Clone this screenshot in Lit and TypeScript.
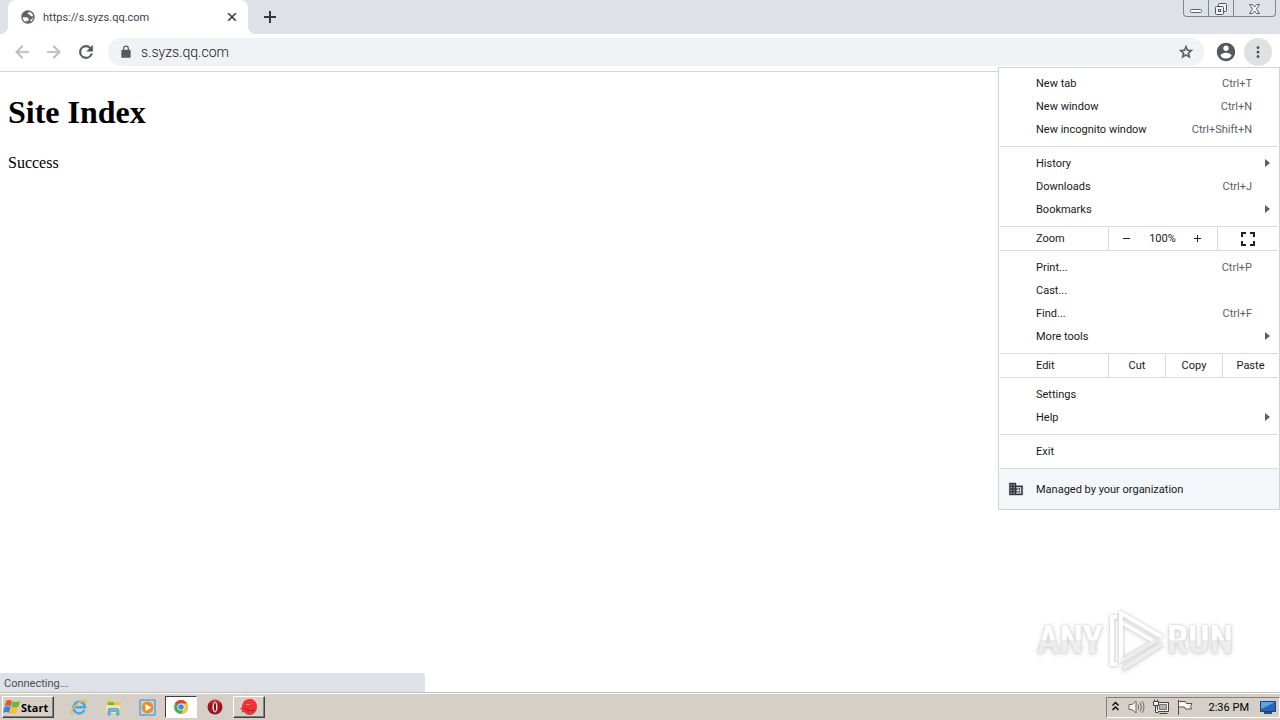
import { LitElement, html, css, svg, nothing } from "lit";
import { customElement } from "lit/decorators.js";

interface MenuEntry {
  label: string;
  keys?: string;
  submenu?: boolean;
}

const TAB_ITEMS: MenuEntry[] = [
  { label: "New tab", keys: "Ctrl+T" },
  { label: "New window", keys: "Ctrl+N" },
  { label: "New incognito window", keys: "Ctrl+Shift+N" },
];
const LIBRARY_ITEMS: MenuEntry[] = [
  { label: "History", submenu: true },
  { label: "Downloads", keys: "Ctrl+J" },
  { label: "Bookmarks", submenu: true },
];
const PAGE_ITEMS: MenuEntry[] = [
  { label: "Print...", keys: "Ctrl+P" },
  { label: "Cast..." },
  { label: "Find...", keys: "Ctrl+F" },
  { label: "More tools", submenu: true },
];
const SETTINGS_ITEMS: MenuEntry[] = [{ label: "Settings" }, { label: "Help", submenu: true }];

const reset = css`
  * {
    box-sizing: border-box;
  }
  button {
    font: inherit;
    color: inherit;
    background: none;
    border: 0;
    margin: 0;
    padding: 0;
  }
  svg {
    display: block;
    flex: none;
  }
`;

const material = (size: number, d: string, weight = 0) =>
  html`<svg width=${size} height=${size} viewBox="0 0 24 24" aria-hidden="true">
    ${svg`<path fill="currentColor" stroke="currentColor" stroke-width=${weight} d=${d}></path>`}
  </svg>`;

const ICON = {
  globe:
    "M12 2C6.48 2 2 6.48 2 12s4.48 10 10 10 10-4.480 10-10S17.520 2 12 2zM4 12.400h4.400c3.400.02 4.960 1.730 4.680 5.130H9.470v2.040A8 8 0 0 1 4 12.400zm11.600 6.740c.9-1.200.1-3.200-.3-3.740h3.200c.3-1.200.2-2.800 1.500-3.400a8 8 0 0 1-4.400 7.140zM19.600 10.400c-1.300.7-3.100.9-4.200-.4-.7-.9-.3-1.800-1.500-2-1.300-.2-2.400.3-2.400-1 0-1.400 1.700-1.100 1.800-2.900a8 8 0 0 1 6.300 6.300z",
  close: "M19 6.410 17.590 5 12 10.590 6.410 5 5 6.410 10.590 12 5 17.590 6.410 19 12 13.410 17.590 19 19 17.590 13.410 12z",
  back: "M20 11H7.830l5.590-5.590L12 4l-8 8 8 8 1.410-1.410L7.830 13H20v-2z",
  forward: "M12 4l-1.410 1.410L16.170 11H4v2h12.170l-5.580 5.590L12 20l8-8z",
  reload:
    "M17.650 6.350A7.960 7.960 0 0 0 12 4a8 8 0 1 0 7.730 10h-2.080A6 6 0 1 1 12 6c1.660 0 3.140.69 4.220 1.780L13 11h7V4l-2.350 2.350z",
  lock: "M18 8h-1V6A5 5 0 0 0 7 6v2H6a2 2 0 0 0-2 2v10c0 1.100.9 2 2 2h12a2 2 0 0 0 2-2V10a2 2 0 0 0-2-2zM9 6a3 3 0 0 1 6 0v2H9V6z",
  star: "M22 9.240l-7.190-.62L12 2 9.190 8.630 2 9.240l5.460 4.730L5.820 21 12 17.270 18.180 21l-1.630-7.030L22 9.240zM12 15.400l-3.760 2.270 1-4.280-3.320-2.880 4.380-.38L12 6.100l1.710 4.040 4.380.38-3.320 2.880 1 4.280L12 15.400z",
  account:
    "M12 2C6.480 2 2 6.480 2 12s4.480 10 10 10 10-4.480 10-10S17.520 2 12 2zm0 3c1.660 0 3 1.340 3 3s-1.340 3-3 3-3-1.340-3-3 1.340-3 3-3zm0 14.200a7.200 7.200 0 0 1-6-3.220c.03-1.990 4-3.080 6-3.080 1.990 0 5.970 1.090 6 3.080a7.200 7.200 0 0 1-6 3.220z",
  dots: "M12 8a2 2 0 1 0 0-4 2 2 0 0 0 0 4zm0 2a2 2 0 1 0 0 4 2 2 0 0 0 0-4zm0 6a2 2 0 1 0 0 4 2 2 0 0 0 0-4z",
  business:
    "M12 7V3H2v18h20V7H12zM6 19H4v-2h2v2zm0-4H4v-2h2v2zm0-4H4V9h2v2zm0-4H4V5h2v2zm4 12H8v-2h2v2zm0-4H8v-2h2v2zm0-4H8V9h2v2zm0-4H8V5h2v2zm10 12h-8v-2h2v-2h-2v-2h2v-2h-2V9h8v10zm-2-8h-2v2h2v-2zm0 4h-2v2h2v-2z",
};

@customElement("tab-strip")
export class TabStrip extends LitElement {
  static styles = [
    reset,
    css`
      :host {
        display: flex;
        justify-content: space-between;
        height: 34px;
        padding-left: 8px;
        background: #dee1e8;
        color: #3c4043;
      }
      .tabs,
      .tab {
        display: flex;
        align-items: center;
      }
      .tab {
        position: relative;
        width: 240px;
        height: 34px;
        padding: 0 9px 0 12px;
        gap: 7px;
        border-radius: 8px 8px 0 0;
        background: #fff;
        font-size: 11px;
      }
      .tab::before,
      .tab::after {
        content: "";
        position: absolute;
        bottom: 0;
        width: 8px;
        height: 8px;
      }
      .tab::before {
        right: 100%;
        background: radial-gradient(circle at 0 0, transparent 8px, #fff 8px);
      }
      .tab::after {
        left: 100%;
        background: radial-gradient(circle at 100% 0, transparent 8px, #fff 8px);
      }
      .favicon {
        color: #5f6368;
      }
      .title {
        flex: 1;
      }
      .new {
        margin-left: 14px;
      }
      .window {
        display: flex;
        height: 17px;
        margin-right: 4px;
        border: 1px solid #80858e;
        border-top: 0;
        border-radius: 0 0 4px 4px;
      }
      .window button {
        display: grid;
        place-items: center;
        width: 24px;
      }
      .window button + button {
        width: 25px;
        border-left: 1px solid #80858e;
      }
      .window button:last-child {
        width: 42px;
      }
    `,
  ];

  render() {
    return html`
      <div class="tabs">
        <div class="tab">
          <span class="favicon">${material(16, ICON.globe)}</span>
          <span class="title">https://s.syzs.qq.com</span>
          <button aria-label="Close tab">${material(14, ICON.close, 1)}</button>
        </div>
        <button class="new" aria-label="New tab">
          <svg width="16" height="16" viewBox="0 0 16 16"><path d="M8 2v12M2 8h12" stroke="#35383d" stroke-width="2" /></svg>
        </button>
      </div>
      <div class="window">
        <button aria-label="Minimize">
          <svg width="14" height="15" viewBox="0 0 14 15"><rect x="1.500" y="8.500" width="11" height="3" rx="1" fill="#fff" stroke="#5c626c" /></svg>
        </button>
        <button aria-label="Restore">
          <svg width="14" height="15" viewBox="0 0 14 15" fill="#f2f3f6" stroke="#4f555f">
            <rect x="4.500" y="2.500" width="8" height="8" rx="1" />
            <rect x="1.500" y="5.500" width="8" height="8" rx="1" />
            <rect x="4.500" y="8.500" width="2" height="2" />
          </svg>
        </button>
        <button aria-label="Close">
          <svg width="13" height="15" viewBox="0 0 13 15"><path d="M1.500 3.500h3l2 2.500 2-2.500h3L8.500 8l3 4.500h-3l-2-2.500-2 2.500h-3L4.500 8z" fill="#f4f5f7" stroke="#5c626c" /></svg>
        </button>
      </div>
    `;
  }
}

@customElement("tool-bar")
export class ToolBar extends LitElement {
  static styles = [
    reset,
    css`
      :host {
        display: flex;
        align-items: center;
        gap: 8px;
        height: 38px;
        padding: 0 8px 1px;
        border-bottom: 1px solid #d5d7da;
        background: #fff;
        color: #55595e;
      }
      .group {
        display: flex;
        gap: 4px;
      }
      .round {
        display: grid;
        place-items: center;
        width: 28px;
        height: 28px;
        border-radius: 50%;
      }
      .round[disabled] {
        color: #babcbe;
      }
      .pressed {
        background: #e0e1e2;
      }
      .address {
        display: flex;
        flex: 1;
        align-items: center;
        gap: 8px;
        height: 28px;
        padding: 0 10px 0 11px;
        border-radius: 14px;
        background: #f0f3f5;
      }
      input {
        flex: 1;
        min-width: 0;
        padding: 0;
        border: 0;
        outline: 0;
        background: none;
        color: #17191c;
        font: 300 14px Roboto, sans-serif;
      }
    `,
  ];

  render() {
    return html`
      <div class="group">
        <button class="round" disabled aria-label="Back">${material(20, ICON.back, 0.5)}</button>
        <button class="round" disabled aria-label="Forward">${material(20, ICON.forward, 0.5)}</button>
        <button class="round" aria-label="Reload">${material(20, ICON.reload, 0.7)}</button>
      </div>
      <div class="address">
        ${material(14, ICON.lock)}
        <input type="text" aria-label="Address" value="s.syzs.qq.com" />
        <button aria-label="Bookmark this page">${material(16, ICON.star, 0.8)}</button>
      </div>
      <div class="group">
        <button class="round" aria-label="Profile">${material(22, ICON.account)}</button>
        <button class="round pressed" aria-label="Menu">${material(18, ICON.dots)}</button>
      </div>
    `;
  }
}

@customElement("app-menu")
export class AppMenu extends LitElement {
  static styles = [
    reset,
    css`
      :host {
        display: block;
        width: 282px;
        border: 1px solid #d0d3d6;
        background: #fff;
        color: #17181a;
        font-size: 11px;
      }
      .section {
        padding: 5px 0;
      }
      .section:first-child {
        padding-top: 4px;
      }
      .section,
      .strip {
        margin: 0 1px;
        border-bottom: 1px solid #d8dbde;
      }
      .item {
        display: flex;
        align-items: center;
        width: 100%;
        height: 23px;
        padding: 0 8px 0 36px;
        text-align: left;
      }
      .label {
        flex: 1;
      }
      .keys {
        padding-right: 18px;
        color: #5b5e62;
      }
      .strip {
        display: flex;
        height: 24px;
      }
      .strip .name {
        flex: 1;
        align-self: center;
        padding-left: 36px;
      }
      .cell {
        display: flex;
        align-items: center;
        justify-content: space-between;
        border-left: 1px solid #d8dbde;
      }
      .zoom {
        width: 109px;
        padding: 0 15px 0 14px;
      }
      .zoom button {
        width: 8px;
      }
      .full {
        width: 61px;
        justify-content: center;
      }
      .edit {
        width: 57px;
        justify-content: center;
      }
      .edit:last-child {
        width: 56px;
      }
      .managed {
        display: flex;
        align-items: center;
        gap: 12px;
        width: 100%;
        height: 40px;
        padding-left: 9px;
        background: #f4f7fa;
      }
      .managed svg {
        color: #35383e;
      }
    `,
  ];

  private section(items: MenuEntry[]) {
    return html`<div class="section">
      ${items.map(
        (item) => html`<button class="item" role="menuitem">
          <span class="label">${item.label}</span>
          ${item.keys ? html`<span class="keys">${item.keys}</span>` : nothing}
          ${item.submenu
            ? html`<svg width="5" height="9" viewBox="0 0 5 9"><path d="M0 0l5 4-5 4z" fill="#5b5e62" /></svg>`
            : nothing}
        </button>`,
      )}
    </div>`;
  }

  render() {
    return html`
      ${this.section(TAB_ITEMS)} ${this.section(LIBRARY_ITEMS)}
      <div class="strip">
        <span class="name">Zoom</span>
        <div class="cell zoom">
          <button aria-label="Zoom out">
            <svg width="8" height="8" viewBox="0 0 8 8"><path d="M0 3.500h7" stroke="#222" /></svg>
          </button>
          <span>100%</span>
          <button aria-label="Zoom in">
            <svg width="8" height="8" viewBox="0 0 8 8"><path d="M0 3.500h7M3.500 0v7" stroke="#222" /></svg>
          </button>
        </div>
        <button class="cell full" aria-label="Full screen">
          <svg width="14" height="14" viewBox="0 0 14 14"><path d="M1 5V1h4M9 1h4v4M13 9v4H9M5 13H1V9" fill="none" stroke="#222" stroke-width="2" /></svg>
        </button>
      </div>
      ${this.section(PAGE_ITEMS)}
      <div class="strip">
        <span class="name">Edit</span>
        ${["Cut", "Copy", "Paste"].map((label) => html`<button class="cell edit">${label}</button>`)}
      </div>
      ${this.section(SETTINGS_ITEMS)} ${this.section([{ label: "Exit" }])}
      <button class="managed">${material(16, ICON.business, 0.6)}<span>Managed by your organization</span></button>
    `;
  }
}

@customElement("task-bar")
export class TaskBar extends LitElement {
  static styles = [
    reset,
    css`
      :host {
        display: flex;
        align-items: center;
        height: 28px;
        padding: 1px 0 0 2px;
        border-top: 1px solid #c3c1bb;
        background: #d5cfc8;
        box-shadow: inset 0 1px #fff;
        font-size: 11px;
        color: #000;
      }
      .raised {
        border: 1px solid;
        border-color: #fff #404040 #404040 #fff;
        box-shadow: inset -1px -1px #848078;
      }
      .start {
        display: flex;
        align-items: center;
        width: 52px;
        height: 22px;
        font: bold 11px "Open Sans", sans-serif;
      }
      .apps {
        display: flex;
        flex: 1;
        gap: 2px;
        padding-left: 9px;
      }
      .app {
        display: grid;
        place-items: center;
        width: 32px;
        height: 22px;
      }
      .active {
        border: 1px solid;
        border-color: #404040 #fff #fff #404040;
        background: #fff;
      }
      .tray {
        display: flex;
        align-items: center;
        height: 21px;
        padding: 0 3px 0 4px;
        gap: 8px;
        border: 1px solid;
        border-color: #848078 #fff #fff #848078;
      }
      .clock {
        padding: 0 3px 0 8px;
      }
    `,
  ];

  render() {
    return html`
      <button class="start raised">
        <svg width="18" height="18" viewBox="0 0 17 16">
          <path d="M3 2c2-1 4-1 5.500.2L7.200 7.500C5.500 6.400 3.500 6.500 1.600 7.300z" fill="#e8572a" />
          <path d="M9.100 2.600c2 1 4.400 1 6.900-.2l-1.500 5.300c-2.200 1-4.600 1-6.700 0z" fill="#72b532" />
          <path d="M1.400 8c2-.9 3.900-.9 5.700.1l-1.400 5.500C4 12.600 2 12.600 0 13.400z" fill="#3b83d4" />
          <path d="M7.600 8.500c2 1 4.400.9 6.600 0l-1.500 5.400c-2.200 1-4.500.9-6.500 0z" fill="#f5c12c" />
        </svg>
        <span>Start</span>
      </button>
      <div class="apps">
        <button class="app" aria-label="Internet Explorer">
          <svg width="18" height="18" viewBox="0 0 18 18" fill="none">
            <path d="M14.500 12A5.800 5.800 0 1 1 15 9.200H5" stroke="#45a9e6" stroke-width="2.400" />
            <path d="M2.500 16.500C-.5 15 3.500 8 9.500 4.200c4.500-2.800 7.800-2.700 6.200 1.300" stroke="#e6bd4a" stroke-width="1.500" />
          </svg>
        </button>
        <button class="app" aria-label="Windows Explorer">
          <svg width="17" height="17" viewBox="0 0 17 17">
            <path d="M1 3l1-1.500h5L8 3h7.500v10H1z" fill="#e8c65a" />
            <path d="M3 3.500h6V6H3z" fill="#59b559" />
            <path d="M1 6h14.500v8H1z" fill="#f7e39a" />
            <path d="M3 16v-4.500Q3 9.500 5 9.500h7q2 0 2 2V16h-2.500v-3.500h-6V16z" fill="#69b7e3" stroke="#3e93c9" stroke-width=".6" />
          </svg>
        </button>
        <button class="app" aria-label="Media Player">
          <svg width="17" height="17" viewBox="0 0 17 17">
            <path d="M1 1h15v15H1z" fill="#b5dbf4" stroke="#3c84c2" />
            <circle cx="8.500" cy="8.500" r="6" fill="#f38b1c" />
            <path d="M6.500 5l6 3.500-6 3.500z" fill="#fff" />
          </svg>
        </button>
        <button class="app active" aria-label="Google Chrome">
          <svg width="16" height="16" viewBox="0 0 16 16">
            <circle cx="8" cy="8" r="7" fill="#4caf50" />
            <path d="M8 8L1.900 4.500A7 7 0 0 1 14.100 4.500z" fill="#e04437" />
            <path d="M8 4.500h6.100A7 7 0 0 1 8 15l3-5.500z" fill="#fbc52d" />
            <circle cx="8" cy="8" r="3.600" fill="#fff" />
            <circle cx="8" cy="8" r="2.800" fill="#4285f4" />
          </svg>
        </button>
        <button class="app" aria-label="Opera">
          <svg width="16" height="16" viewBox="0 0 16 16">
            <circle cx="8" cy="8" r="7.500" fill="#a5121c" />
            <path d="M3 4a6 6 0 0 1 10 0" stroke="#d96a6a" fill="none" />
            <ellipse cx="8" cy="8" rx="2.600" ry="5.400" fill="#ece3df" />
            <ellipse cx="8" cy="8" rx="1" ry="4.200" fill="#7c0a12" />
          </svg>
        </button>
        <button class="app raised" aria-label="Remote app">
          <svg width="20" height="18" viewBox="0 0 20 18">
            <path d="M4 5c1-3 5-4.500 8-4 4 .6 6 4 6 7.500 0 4-2 8-7 8.500-3 .2-5-1.500-6-3l-3 .5 1.500-2L1 10.500l2-1C2.500 8 3.300 6.500 4 5z" fill="#ee3338" />
            <path d="M5 9.500c2 3 7 3.500 11 2.500" fill="none" stroke="#b81620" />
            <path d="M7 6.500h4" stroke="#ff8080" />
          </svg>
        </button>
      </div>
      <div class="tray">
        <svg width="9" height="12" viewBox="0 0 9 12" fill="none" stroke="#000" stroke-width="1.400"><path d="M1.500 4.500l3-3 3 3M1.500 9l3-3 3 3" /></svg>
        <svg width="17" height="16" viewBox="0 0 17 16" fill="#f4f2ef" stroke="#6f6d69">
          <path d="M1 5.500h3L8 2v12l-4-3.500H1z" />
          <path d="M10 5.500q1.500 2.500 0 5M12 3.500q3 4.500 0 9M14 2q4 6 0 12" fill="none" />
        </svg>
        <svg width="16" height="16" viewBox="0 0 16 16" fill="#f4f2ef" stroke="#45433f">
          <path d="M4.500 3.500h11v9h-11zM6.500 14.500h8" />
          <path d="M6.500 5.500h7v5h-7z" fill="#b5b2ac" stroke="#77746f" />
          <path d="M.5 2.500h5v4h-5zM1.500.5v2M4.500.5v2M2.500 6.500v7h3" />
        </svg>
        <svg width="16" height="16" viewBox="0 0 16 16" fill="#faf9f7" stroke="#55534f"><path d="M1.500 1v15M1.500 2.500h7l1 2h5.500l-1.500 3 1 2.500H8.500l-1-2h-6z" /></svg>
        <span class="clock">2:36 PM</span>
        <svg width="16" height="14" viewBox="0 0 16 14">
          <path d="M.5 1.500h15v10H.5z" fill="#2867b5" stroke="#1b3f7a" />
          <path d="M1 2h14L1 9z" fill="#5fa5e4" />
          <path d="M4 13h8" stroke="#24508f" stroke-width="2" />
        </svg>
      </div>
    `;
  }
}

@customElement("app-root")
export class AppRoot extends LitElement {
  static styles = [
    reset,
    css`
      :host {
        position: relative;
        display: flex;
        flex-direction: column;
        height: 100vh;
        overflow: hidden;
        background: #fff;
        font-family: Roboto, sans-serif;
      }
      .page {
        position: relative;
        flex: 1;
        padding: 21px 8px;
        font-family: "Liberation Serif", serif;
        font-size: 16px;
        line-height: 18px;
        color: #000;
      }
      h1 {
        margin: 0 0 23px;
        font-size: 32px;
        line-height: 38px;
      }
      p {
        margin: 0;
      }
      .status {
        position: absolute;
        left: 0;
        bottom: 0;
        width: 425px;
        height: 19px;
        padding-left: 4px;
        border-top-right-radius: 4px;
        background: #dee1e8;
        color: #4b4f54;
        font: 11px/21px Roboto, sans-serif;
      }
      .menu {
        position: absolute;
        top: 67px;
        right: 0;
      }
      .watermark {
        position: absolute;
        right: 47px;
        bottom: 20px;
        display: flex;
        align-items: center;
        gap: 2px;
        font: bold 38px/64px "Liberation Sans Narrow", "Roboto Condensed", sans-serif;
        filter: drop-shadow(0 0 1px #c8c8c8) drop-shadow(0 1px 2px #dcdcdc);
      }
      .watermark span {
        background: linear-gradient(#fff 50%, #ededed 50%);
        background-clip: text;
        -webkit-background-clip: text;
        color: transparent;
      }
    `,
  ];

  render() {
    return html`
      <tab-strip></tab-strip>
      <tool-bar></tool-bar>
      <main class="page">
        <h1>Site Index</h1>
        <p>Success</p>
        <div class="status">Connecting...</div>
        <div class="watermark">
          <span>ANY</span>
          <svg width="60" height="64" viewBox="0 0 60 64" fill="none" stroke="#fff" stroke-width="4">
            <path d="M18 61l39-25" stroke="#ededed" />
            <path d="M12 9H7v47h5" />
            <path d="M16 54V5l41 24" />
            <path d="M16 14l34 20" />
            <path d="M16 53l36-21" stroke="#ededed" />
          </svg>
          <span>RUN</span>
        </div>
      </main>
      <task-bar></task-bar>
      <app-menu class="menu" role="menu"></app-menu>
    `;
  }
}
